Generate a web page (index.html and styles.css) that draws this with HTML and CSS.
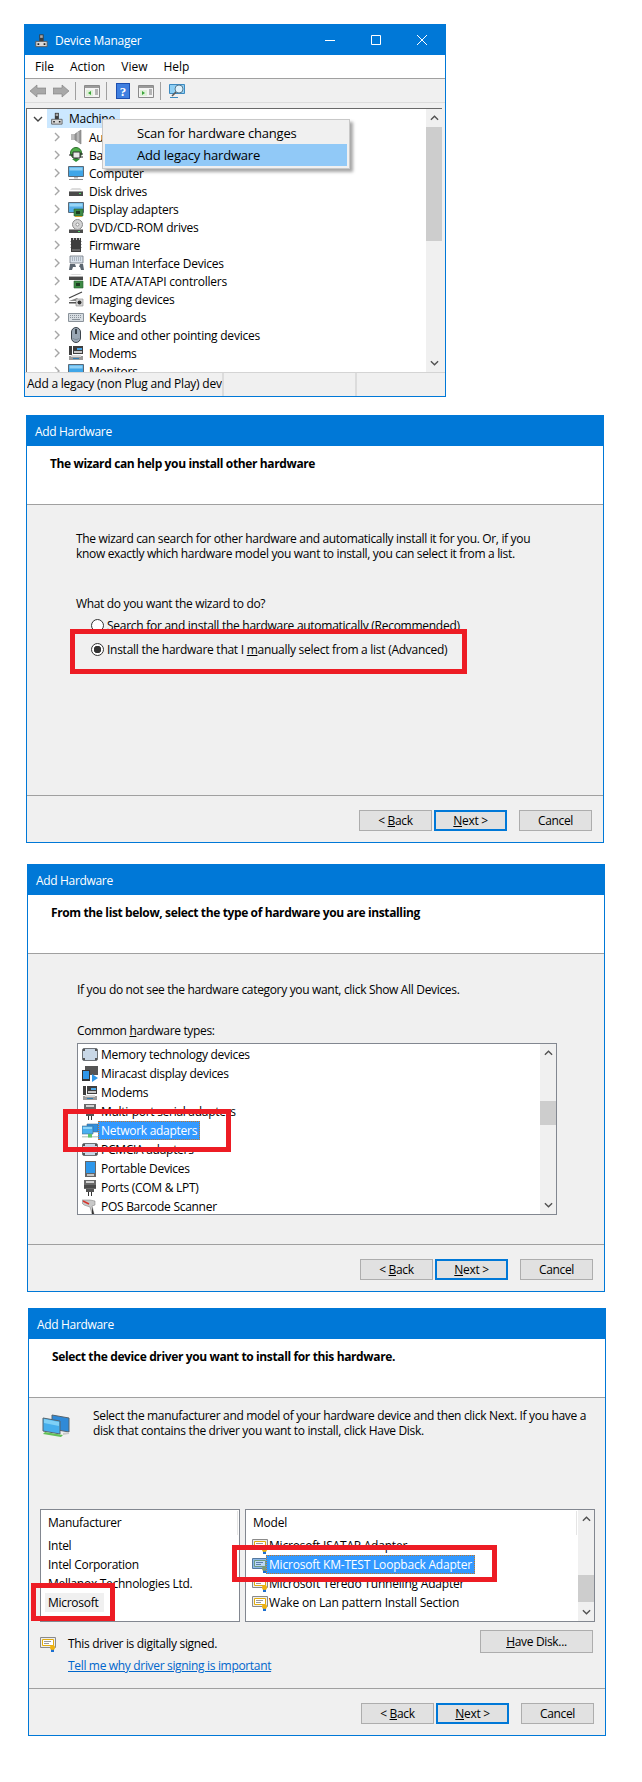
FILE: index.html
```html
<!DOCTYPE html>
<html lang="en">
<head>
    <meta charset="UTF-8">
    <title>Add legacy hardware</title>
    <link rel="stylesheet" href="styles.css">
</head>
<body>
    <svg class="sprite" xmlns="http://www.w3.org/2000/svg">
        <symbol id="i-machine" viewBox="0 0 16 16"><path d="M6 1h5v8H6z" fill="#3c3c3c"/><path d="M7 2h3v3H7z" fill="#a8a8a8"/><path d="M2 9h13v6H2z" fill="#d8d8d8" stroke="#555"/><path d="M4 11h2v2H4zM11 11h2v2h-2z" fill="#222"/></symbol>
        <symbol id="i-audio" viewBox="0 0 16 16"><path d="M3 5h4v6H3z" fill="#bcbcbc"/><path d="M7 5l6-4v14l-6-4z" fill="#9a9a9a" stroke="#777" stroke-width=".6"/><path d="M10 3v10" stroke="#d4d4d4"/></symbol>
        <symbol id="i-battery" viewBox="0 0 16 16"><circle cx="8" cy="6" r="5.5" fill="#4fae4a" stroke="#2c6e2a"/><path d="M5 5h7v6H5z" fill="#e8e8e8" stroke="#333"/><path d="M1 8h4M12 7h3M12 10h3" stroke="#222" stroke-width="1.2"/><path d="M4 12l4 3 4-3" fill="#2f8f33"/></symbol>
        <symbol id="i-computer" viewBox="0 0 16 16"><path d="M.5 1.500h15v10H.5z" fill="#3fa6e8" stroke="#5a6a78"/><path d="M1.500 2.500h13v3h-13z" fill="#8fd0f5"/><path d="M6 12h4v1.500H6z" fill="#b8b8b8"/><path d="M1 14h14v1H1z" fill="#8a8a8a"/></symbol>
        <symbol id="i-disk" viewBox="0 0 16 16"><path d="M2 7l2-2h8l2 2z" fill="#dcdcdc"/><path d="M1 8h14v5H1z" fill="#4a4a4a"/><path d="M1 8h14v1H1z" fill="#9a9a9a"/><path d="M11 10h2v1h-2z" fill="#4cd964"/></symbol>
        <symbol id="i-display" viewBox="0 0 16 16"><path d="M.5 1.500h15v10H.5z" fill="#57afe8" stroke="#5a6a78"/><path d="M1.500 2.500h13v3h-13z" fill="#9ad6f6"/><path d="M6 8h9v7H6z" fill="#3d8a45" stroke="#2a5f30" stroke-width=".6"/><path d="M8 10h4v3H8z" fill="#1e3d22"/><path d="M7 15h7v1H7z" fill="#d1a52b"/></symbol>
        <symbol id="i-dvd" viewBox="0 0 16 16"><circle cx="9.500" cy="5.500" r="5" fill="#d4d4d4" stroke="#8a8a8a"/><circle cx="9.500" cy="5.500" r="1.500" fill="#fff" stroke="#666" stroke-width=".6"/><path d="M1 10h14v4H1z" fill="#4a4a4a"/><path d="M1 10h14v1H1z" fill="#a0a0a0"/><path d="M10 12h2v1h-2z" fill="#4cd964"/></symbol>
        <symbol id="i-firmware" viewBox="0 0 16 16"><path d="M3 1h10v14H3z" fill="#3e3e3e"/><path d="M5 1h1v2H5zM8 1h1v2H8zM11 1h1v2h-1zM2 4h1v1H2zM2 7h1v1H2zM2 10h1v1H2zM13 4h1v1h-1zM13 7h1v1h-1zM13 10h1v1h-1z" fill="#bdbdbd"/><path d="M4 12h8v2H4z" fill="#666"/></symbol>
        <symbol id="i-hid" viewBox="0 0 16 16"><path d="M2 1h13v7H2z" fill="#d9e1ea" stroke="#6f7780" stroke-width=".8"/><path d="M4 3h9M4 5h9" stroke="#7f8a96" stroke-dasharray="1 1"/><path d="M1 15l1-6h5l1 3h3l1-3h3l1 6h-3l-1-3H5l-1 3z" fill="#5c6670"/></symbol>
        <symbol id="i-ide" viewBox="0 0 16 16"><path d="M2 2l2-1h8l2 1z" fill="#dcdcdc"/><path d="M1 3h14v4H1z" fill="#4a4a4a"/><path d="M1 3h14v1H1z" fill="#b0b0b0"/><path d="M6 8h9v7H6z" fill="#3d8a45" stroke="#2a5f30" stroke-width=".6"/><path d="M8 10h4v3H8z" fill="#1e3d22"/></symbol>
        <symbol id="i-imaging" viewBox="0 0 16 16"><path d="M1 7L14 1" stroke="#444" stroke-width="1.200"/><path d="M1 10l8-3 1 1v2z" fill="#888"/><path d="M8 8h7v7H8z" fill="#d8d8d8" stroke="#888" stroke-width=".6"/><circle cx="11.500" cy="11.500" r="2" fill="#333"/><path d="M1 11h7v1.500H1z" fill="#555"/></symbol>
        <symbol id="i-keyboard" viewBox="0 0 16 16"><path d="M.5 4.500h15v8H.5z" fill="#d7dde2" stroke="#8a929a"/><path d="M2 6.500h12M2 8.500h12" stroke="#8a929a" stroke-dasharray="1 1"/><path d="M4 10.500h8" stroke="#8a929a"/></symbol>
        <symbol id="i-mouse" viewBox="0 0 16 16"><rect x="3.500" y=".5" width="9" height="15" rx="4.500" fill="#9aa7b4" stroke="#3c444c"/><path d="M8 2v5" stroke="#39424a" stroke-width="2"/><path d="M5 11c1 2 5 2 6 0" stroke="#7d8a96" fill="none"/></symbol>
        <symbol id="i-modem" viewBox="0 0 16 16"><path d="M1 1h3v9H1z" fill="#3e3e3e"/><path d="M5 1h10v8H5z" fill="#3e3e3e"/><path d="M9 3h5v2H9z" fill="#49a6e6"/><path d="M6 6h8v2H6z" fill="#c8c8c8"/><path d="M1 11h14v4H1z" fill="#9a9a9a"/><path d="M3 10h10v2H3z" fill="#d8d8d8"/><path d="M5 13h6v1H5z" fill="#2f7db3"/></symbol>
        <symbol id="i-card" viewBox="0 0 16 16"><rect x=".5" y="1.500" width="15" height="12" rx="1.500" fill="#c8d7e6" stroke="#6e7378"/><path d="M1 2h2v2H1zM13 2h2v2h-2zM1 11h2v2H1zM13 11h2v2h-2z" fill="#555"/></symbol>
        <symbol id="i-miracast" viewBox="0 0 16 16"><path d="M3 0h13v9H3z" fill="#555"/><path d="M0 4h8v11H0z" fill="#333"/><path d="M1 5h6v8H1z" fill="#2e97ea"/><path d="M10 8l6 4-6 4z" fill="#2e97ea"/></symbol>
        <symbol id="i-port" viewBox="0 0 16 16"><path d="M2 0h12v9H2z" fill="#6a6a6a"/><path d="M4 1h8v2H4z" fill="#d2d2d2"/><path d="M2 5h12v3H2z" fill="#4a4a4a"/><path d="M4 9h8v3H4z" fill="#555"/><path d="M6 12h1v4H6zM9 12h1v4H9z" fill="#333"/></symbol>
        <symbol id="i-network" viewBox="0 0 16 16"><path d="M5 1h11v8H5z" fill="#2e8fe0" stroke="#4b6b86" stroke-width=".6"/><path d="M0 3h11v8H0z" fill="#4ab0f0" stroke="#4b6b86" stroke-width=".6"/><path d="M1 4h9v2H1z" fill="#8fd4f8"/><path d="M0 13h16v1.500H0z" fill="#c4d0c8"/><path d="M6 11h4v3.500H6z" fill="#5dc46a"/></symbol>
        <symbol id="i-portable" viewBox="0 0 16 16"><path d="M3 0h11v16H3z" fill="#666"/><path d="M4 1h9v11H4z" fill="#2e97ea"/><path d="M5 13h7v2H5z" fill="#c4c4c4"/></symbol>
        <symbol id="i-pos" viewBox="0 0 16 16"><path d="M0 1h8l5 1v4l-3 1 2 8h-2L8 8 2 6 0 4z" fill="#c8c8c8" stroke="#777" stroke-width=".5"/><path d="M1 2l6 3" stroke="#d8342c" stroke-width="1.500"/><path d="M10 8l2 7h-2z" fill="#333"/></symbol>
        <symbol id="i-cert" viewBox="0 0 16 16"><path d="M.5 1.500h15v10H.5z" fill="#eee" stroke="#8a8a8a"/><path d="M2.500 3.500h11v6h-11z" fill="#fff" stroke="#e2ad10"/><path d="M4 5.500h7M4 7.500h5" stroke="#9a9a9a"/><path d="M11 13h3v3h-3z" fill="#1c6fd0"/><circle cx="12.500" cy="11.500" r="2.500" fill="#eeb211"/></symbol>
        <symbol id="i-cert-sel" viewBox="0 0 16 16"><path d="M.5 1.500h15v10H.5z" fill="#8cb8e8" stroke="#55789e"/><path d="M2.500 3.500h11v6h-11z" fill="#bcd8f6" stroke="#6f9a80"/><path d="M4 5.500h7M4 7.500h5" stroke="#5b7fa8"/><path d="M11 13h3v3h-3z" fill="#1c6fd0"/><circle cx="12.500" cy="11.500" r="2.500" fill="#7a9a7a"/></symbol>
        <symbol id="i-net-large" viewBox="0 0 28 26"><path d="M10 2l17 3v14l-17-3z" fill="#2f8ad8" stroke="#55646e"/><path d="M1 5l17 3v13L1 18z" fill="#46aeec" stroke="#55646e"/><path d="M2 6l15 3v4L2 10z" fill="#7fd0f6"/><path d="M1 21l18 3 2-2-18-3z" fill="#63c057"/><path d="M21 22l6-1v-2l-6 1z" fill="#c9c9c9"/></symbol>
    </svg>

    <div class="window device-manager">
        <div class="titlebar">
            <svg class="title-icon"><use href="#i-machine"/></svg>
            <span class="title-text">Device Manager</span>
            <div class="window-controls">
                <svg width="10" height="10" viewBox="0 0 10 10"><path d="M0 5.500h10" stroke="#fff"/></svg>
                <svg width="10" height="10" viewBox="0 0 10 10"><path d="M.5.500h9v9h-9z" fill="none" stroke="#fff"/></svg>
                <svg width="10" height="10" viewBox="0 0 10 10"><path d="M0 0l10 10M10 0L0 10" stroke="#fff"/></svg>
            </div>
        </div>
        <div class="menubar">
            <span>File</span><span>Action</span><span>View</span><span>Help</span>
        </div>
        <div class="toolbar">
            <svg class="tool tool-back" viewBox="0 0 16 16"><path d="M0 8l7-6v3h9v6H7v3z" fill="#a8a8a8" stroke="#7c7c7c" stroke-width=".6"/></svg>
            <svg class="tool" viewBox="0 0 16 16"><path d="M16 8L9 2v3H0v6h9v3z" fill="#a8a8a8" stroke="#7c7c7c" stroke-width=".6"/></svg>
            <i class="tool-sep"></i>
            <svg class="tool" viewBox="0 0 16 16"><path d="M.5 2.500h15v12H.5z" fill="#f4f4f4" stroke="#8a8a8a"/><path d="M1 3h14v2H1z" fill="#9a9a9a"/><path d="M2 7h7v6H2z" fill="#dff0d8"/><path d="M7 8v4L4 10z" fill="#3aa53a"/><path d="M11 7h3M11 9h3M11 11h3" stroke="#777"/></svg>
            <i class="tool-sep"></i>
            <svg class="tool help-tool" viewBox="0 0 14 16"><path d="M0 0h14v16H0z" fill="#1c4fb0"/><path d="M1 1h12v14H1z" fill="#3f7fe0"/><text x="7" y="13" class="help-mark">?</text></svg>
            <svg class="tool" viewBox="0 0 16 16"><path d="M.5 2.500h15v12H.5z" fill="#f4f4f4" stroke="#8a8a8a"/><path d="M1 3h14v2H1z" fill="#9a9a9a"/><path d="M2 7h7v6H2z" fill="#dff0d8"/><path d="M4 8v4l3-2z" fill="#3aa53a"/><path d="M11 7h3M11 9h3M11 11h3" stroke="#777"/></svg>
            <i class="tool-sep"></i>
            <svg class="tool" viewBox="0 0 16 16"><path d="M.5 1.500h15v9H.5z" fill="#8fd0f5" stroke="#3d8ac0"/><path d="M1 14h8v1H1z" fill="#3d8ac0"/><circle cx="10" cy="6" r="4" fill="#dff2fc" stroke="#5a7a90"/><path d="M7 9l-4 4" stroke="#5a5a5a" stroke-width="1.600"/></svg>
        </div>
        <div class="toolbar-gap"></div>
        <div class="tree-pane">
            <div class="tree">
                <div class="tree-root">
                    <svg class="expander" viewBox="0 0 10 10"><path d="M1 3l4 4 4-4" fill="none" stroke="#444" stroke-width="1.400"/></svg>
                    <span class="root-label"><svg class="root-icon"><use href="#i-machine"/></svg>Machine</span>
                </div>
                <div class="tree-row"><svg class="expander" viewBox="0 0 10 10"><path d="M3 1l4 4-4 4" fill="none" stroke="#a6a6a6" stroke-width="1.400"/></svg><svg class="row-icon"><use href="#i-audio"/></svg>Audio inputs and outputs</div>
                <div class="tree-row"><svg class="expander" viewBox="0 0 10 10"><path d="M3 1l4 4-4 4" fill="none" stroke="#a6a6a6" stroke-width="1.400"/></svg><svg class="row-icon"><use href="#i-battery"/></svg>Batteries</div>
                <div class="tree-row"><svg class="expander" viewBox="0 0 10 10"><path d="M3 1l4 4-4 4" fill="none" stroke="#a6a6a6" stroke-width="1.400"/></svg><svg class="row-icon"><use href="#i-computer"/></svg>Computer</div>
                <div class="tree-row"><svg class="expander" viewBox="0 0 10 10"><path d="M3 1l4 4-4 4" fill="none" stroke="#a6a6a6" stroke-width="1.400"/></svg><svg class="row-icon"><use href="#i-disk"/></svg>Disk drives</div>
                <div class="tree-row"><svg class="expander" viewBox="0 0 10 10"><path d="M3 1l4 4-4 4" fill="none" stroke="#a6a6a6" stroke-width="1.400"/></svg><svg class="row-icon"><use href="#i-display"/></svg>Display adapters</div>
                <div class="tree-row"><svg class="expander" viewBox="0 0 10 10"><path d="M3 1l4 4-4 4" fill="none" stroke="#a6a6a6" stroke-width="1.400"/></svg><svg class="row-icon"><use href="#i-dvd"/></svg>DVD/CD-ROM drives</div>
                <div class="tree-row"><svg class="expander" viewBox="0 0 10 10"><path d="M3 1l4 4-4 4" fill="none" stroke="#a6a6a6" stroke-width="1.400"/></svg><svg class="row-icon"><use href="#i-firmware"/></svg>Firmware</div>
                <div class="tree-row"><svg class="expander" viewBox="0 0 10 10"><path d="M3 1l4 4-4 4" fill="none" stroke="#a6a6a6" stroke-width="1.400"/></svg><svg class="row-icon"><use href="#i-hid"/></svg>Human Interface Devices</div>
                <div class="tree-row"><svg class="expander" viewBox="0 0 10 10"><path d="M3 1l4 4-4 4" fill="none" stroke="#a6a6a6" stroke-width="1.400"/></svg><svg class="row-icon"><use href="#i-ide"/></svg>IDE ATA/ATAPI controllers</div>
                <div class="tree-row"><svg class="expander" viewBox="0 0 10 10"><path d="M3 1l4 4-4 4" fill="none" stroke="#a6a6a6" stroke-width="1.400"/></svg><svg class="row-icon"><use href="#i-imaging"/></svg>Imaging devices</div>
                <div class="tree-row"><svg class="expander" viewBox="0 0 10 10"><path d="M3 1l4 4-4 4" fill="none" stroke="#a6a6a6" stroke-width="1.400"/></svg><svg class="row-icon"><use href="#i-keyboard"/></svg>Keyboards</div>
                <div class="tree-row"><svg class="expander" viewBox="0 0 10 10"><path d="M3 1l4 4-4 4" fill="none" stroke="#a6a6a6" stroke-width="1.400"/></svg><svg class="row-icon"><use href="#i-mouse"/></svg>Mice and other pointing devices</div>
                <div class="tree-row"><svg class="expander" viewBox="0 0 10 10"><path d="M3 1l4 4-4 4" fill="none" stroke="#a6a6a6" stroke-width="1.400"/></svg><svg class="row-icon"><use href="#i-modem"/></svg>Modems</div>
                <div class="tree-row"><svg class="expander" viewBox="0 0 10 10"><path d="M3 1l4 4-4 4" fill="none" stroke="#a6a6a6" stroke-width="1.400"/></svg><svg class="row-icon"><use href="#i-computer"/></svg>Monitors</div>
            </div>
            <div class="scrollbar tree-scroll">
                <svg class="arrow" viewBox="0 0 10 6"><path d="M1 5l4-4 4 4" fill="none" stroke="#505050" stroke-width="1.500"/></svg>
                <div class="track"><div class="thumb"></div></div>
                <svg class="arrow" viewBox="0 0 10 6"><path d="M1 1l4 4 4-4" fill="none" stroke="#505050" stroke-width="1.500"/></svg>
            </div>
        </div>
        <div class="statusbar">
            <div class="status-main">Add a legacy (non Plug and Play) device to the computer.</div>
            <div class="status-mid"></div>
            <div class="status-end"></div>
        </div>
        <div class="context-menu">
            <div class="menu-item">Scan for hardware changes</div>
            <div class="menu-item active">Add legacy hardware</div>
        </div>
    </div>

    <div class="window wizard wizard-one">
        <div class="titlebar"><span class="title-text wizard-title">Add Hardware</span></div>
        <div class="wizard-head">The wizard can help you install other hardware</div>
        <div class="wizard-body choice-body">
            <p class="intro">The wizard can search for other hardware and automatically install it for you. Or, if you<br>know exactly which hardware model you want to install, you can select it from a list.</p>
            <p class="question">What do you want the wizard to do?</p>
            <div class="radio-row"><i class="radio"></i>Search for and install the hardware automatically (Recommended)</div>
            <div class="radio-row"><i class="radio checked"></i><span>Install the hardware that I <u>m</u>anually select from a list (Advanced)</span></div>
        </div>
        <div class="wizard-foot">
            <button class="btn"><span>&lt; <u>B</u>ack</span></button>
            <button class="btn btn-default"><span><u>N</u>ext &gt;</span></button>
            <button class="btn btn-cancel"><span>Cancel</span></button>
        </div>
        <div class="red-box box-radio"></div>
    </div>

    <div class="window wizard wizard-two">
        <div class="titlebar"><span class="title-text wizard-title">Add Hardware</span></div>
        <div class="wizard-head">From the list below, select the type of hardware you are installing</div>
        <div class="wizard-body types-body">
            <p class="types-hint">If you do not see the hardware category you want, click Show All Devices.</p>
            <p class="types-label">Common <u>h</u>ardware types:</p>
            <div class="listbox">
                <div class="list-rows">
                    <div class="list-row"><svg class="row-icon"><use href="#i-card"/></svg>Memory technology devices</div>
                    <div class="list-row"><svg class="row-icon"><use href="#i-miracast"/></svg>Miracast display devices</div>
                    <div class="list-row"><svg class="row-icon"><use href="#i-modem"/></svg>Modems</div>
                    <div class="list-row"><svg class="row-icon"><use href="#i-port"/></svg>Multi-port serial adapters</div>
                    <div class="list-row"><svg class="row-icon"><use href="#i-network"/></svg><span class="sel">Network adapters</span></div>
                    <div class="list-row"><svg class="row-icon"><use href="#i-card"/></svg>PCMCIA adapters</div>
                    <div class="list-row"><svg class="row-icon"><use href="#i-portable"/></svg>Portable Devices</div>
                    <div class="list-row"><svg class="row-icon"><use href="#i-port"/></svg>Ports (COM &amp; LPT)</div>
                    <div class="list-row"><svg class="row-icon"><use href="#i-pos"/></svg>POS Barcode Scanner</div>
                </div>
                <div class="scrollbar types-scroll">
                    <svg class="arrow" viewBox="0 0 10 6"><path d="M1 5l4-4 4 4" fill="none" stroke="#505050" stroke-width="1.500"/></svg>
                    <div class="track"><div class="thumb"></div></div>
                    <svg class="arrow" viewBox="0 0 10 6"><path d="M1 1l4 4 4-4" fill="none" stroke="#505050" stroke-width="1.500"/></svg>
                </div>
            </div>
        </div>
        <div class="wizard-foot">
            <button class="btn"><span>&lt; <u>B</u>ack</span></button>
            <button class="btn btn-default"><span><u>N</u>ext &gt;</span></button>
            <button class="btn btn-cancel"><span>Cancel</span></button>
        </div>
        <div class="red-box box-network"></div>
    </div>

    <div class="window wizard wizard-three">
        <div class="titlebar"><span class="title-text wizard-title">Add Hardware</span></div>
        <div class="wizard-head">Select the device driver you want to install for this hardware.</div>
        <div class="wizard-body driver-body">
            <div class="driver-intro">
                <svg class="net-large"><use href="#i-net-large"/></svg>
                <p>Select the manufacturer and model of your hardware device and then click Next. If you have a<br>disk that contains the driver you want to install, click Have Disk.</p>
            </div>
            <div class="driver-lists">
                <div class="listbox maker-list">
                    <div class="list-rows">
                        <div class="list-head">Manufacturer</div>
                        <div class="maker-row">Intel</div>
                        <div class="maker-row">Intel Corporation</div>
                        <div class="maker-row">Mellanox Technologies Ltd.</div>
                        <div class="maker-row"><span class="sel-grey">Microsoft</span></div>
                    </div>
                    <i class="head-line"></i>
                </div>
                <div class="listbox model-list">
                    <div class="list-rows">
                        <div class="list-head">Model</div>
                        <div class="list-row"><svg class="row-icon"><use href="#i-cert"/></svg>Microsoft ISATAP Adapter</div>
                        <div class="list-row"><svg class="row-icon"><use href="#i-cert-sel"/></svg><span class="sel">Microsoft KM-TEST Loopback Adapter</span></div>
                        <div class="list-row"><svg class="row-icon"><use href="#i-cert"/></svg>Microsoft Teredo Tunneling Adapter</div>
                        <div class="list-row"><svg class="row-icon"><use href="#i-cert"/></svg>Wake on Lan pattern Install Section</div>
                    </div>
                    <i class="head-line"></i>
                    <div class="scrollbar model-scroll">
                        <svg class="arrow" viewBox="0 0 10 6"><path d="M1 5l4-4 4 4" fill="none" stroke="#505050" stroke-width="1.500"/></svg>
                        <div class="track"><div class="thumb"></div></div>
                        <svg class="arrow" viewBox="0 0 10 6"><path d="M1 1l4 4 4-4" fill="none" stroke="#505050" stroke-width="1.500"/></svg>
                    </div>
                </div>
            </div>
            <div class="driver-sign">
                <svg class="sign-icon"><use href="#i-cert"/></svg>
                <div class="sign-text">
                    <div>This driver is digitally signed.</div>
                    <a class="sign-link">Tell me why driver signing is important</a>
                </div>
                <button class="btn btn-disk"><span><u>H</u>ave Disk...</span></button>
            </div>
        </div>
        <div class="wizard-foot">
            <button class="btn"><span>&lt; <u>B</u>ack</span></button>
            <button class="btn btn-default"><span><u>N</u>ext &gt;</span></button>
            <button class="btn btn-cancel"><span>Cancel</span></button>
        </div>
        <div class="red-box box-maker"></div>
        <div class="red-box box-model"></div>
    </div>
</body>
</html>
```

FILE: styles.css
```css
* {
    margin: 0;
    padding: 0;
    box-sizing: border-box;
}

body {
    background-color: #fff;
    color: #000;
    font-family: "Open Sans", "Noto Sans", sans-serif;
    font-size: 12px;
    letter-spacing: -0.33px;
    line-height: 15px;
    padding-top: 24px;
}

.sprite {
    display: none;
}

.window {
    position: relative;
    display: flex;
    flex-direction: column;
    border: 1px solid #0078d7;
    background-color: #f0f0f0;
}

.device-manager {
    width: 422px;
    height: 373px;
    margin-left: 24px;
    overflow: hidden;
    letter-spacing: -0.23px;
}

.wizard {
    width: 578px;
}

.wizard-one {
    height: 428px;
    margin: 18px 0 0 26px;
}

.wizard-two {
    height: 428px;
    margin: 21px 0 0 27px;
}

.wizard-three {
    height: 428px;
    margin: 16px 0 0 28px;
}

.titlebar {
    flex: 0 0 30px;
    display: flex;
    align-items: center;
    background-color: #0078d7;
    color: #fff;
}

.title-icon {
    width: 14px;
    height: 15px;
    margin: 0 7px 0 9px;
}

.wizard-title {
    margin-left: 8px;
}

.window-controls {
    display: flex;
    gap: 36px;
    margin-left: auto;
    margin-right: 18px;
}

.menubar {
    flex: 0 0 24px;
    display: flex;
    align-items: center;
    gap: 16px;
    padding-left: 10px;
    background-color: #fff;
    border-bottom: 1px solid #a0a0a0;
    letter-spacing: 0;
}

.toolbar {
    flex: 0 0 23px;
    display: flex;
    align-items: center;
    padding-left: 5px;
    background-color: #f0f0f0;
}

.tool {
    width: 16px;
    height: 16px;
    margin-right: 6px;
}

.tool-back {
    margin-right: 7px;
}

.help-tool {
    width: 14px;
    margin-left: 1px;
    margin-right: 8px;
}

.help-mark {
    fill: #fff;
    font-family: "Liberation Serif", serif;
    font-size: 13px;
    font-weight: 700;
    text-anchor: middle;
}

.tool-sep {
    width: 1px;
    height: 18px;
    margin: 0 8px 0 0;
    background-color: #a0a0a0;
}

.toolbar-gap {
    flex: 0 0 6px;
    border-top: 1px solid #dcdcdc;
}

.tree-pane {
    flex: 1;
    min-height: 0;
    display: flex;
    margin: 0 3px 0 1px;
    background-color: #fff;
    border-top: 1px solid #696969;
    border-left: 1px solid #696969;
}

.tree {
    flex: 1;
    min-width: 0;
    overflow: hidden;
}

.tree-root {
    height: 19px;
    display: flex;
    align-items: center;
    padding-left: 6px;
}

.root-label {
    display: flex;
    align-items: center;
    height: 19px;
    margin-left: 4px;
    padding: 0 5px 0 3px;
    background-color: #cce8ff;
    width: 73px;
}

.root-icon {
    width: 14px;
    height: 15px;
    margin-right: 6px;
}

.expander {
    width: 10px;
    height: 10px;
    flex: none;
}

.tree-row {
    height: 18px;
    display: flex;
    align-items: center;
    padding-left: 25px;
    white-space: nowrap;
}

.row-icon {
    width: 16px;
    height: 16px;
    flex: none;
}

.tree-row .row-icon {
    margin: 0 5px 0 6px;
}

.scrollbar {
    flex: 0 0 16px;
    display: flex;
    flex-direction: column;
    align-items: center;
    background-color: #f0f0f0;
}

.arrow {
    flex: 0 0 auto;
    width: 9px;
    height: 6px;
    margin: 6px 0;
}

.track {
    flex: 1;
    width: 100%;
    min-height: 0;
}

.thumb {
    background-color: #cdcdcd;
}

.tree-scroll .thumb {
    height: 114px;
}

.statusbar {
    flex: 0 0 24px;
    display: flex;
    padding-left: 2px;
    align-items: center;
    border-top: 1px solid #d4d4d4;
}

.status-main {
    width: 197px;
    height: 100%;
    line-height: 22px;
    overflow: hidden;
    white-space: nowrap;
    border-right: 2px solid #dcdcdc;
}

.status-mid {
    width: 133px;
    height: 100%;
    border-right: 2px solid #dcdcdc;
}

.context-menu {
    position: absolute;
    left: 77px;
    top: 94px;
    width: 248px;
    height: 50px;
    padding: 2px;
    background-color: #f0f0f0;
    border: 1px solid #c8c8c8;
    box-shadow: 3px 3px 3px rgba(0, 0, 0, 0.35);
    font-size: 13px;
    letter-spacing: -0.2px;
}

.menu-item {
    height: 22px;
    line-height: 22px;
    padding-left: 32px;
}

.menu-item.active {
    background-color: #91c9f7;
}

.wizard-head {
    flex: 0 0 59px;
    padding: 10px 0 0 23px;
    background-color: #fff;
    border-bottom: 1px solid #a0a0a0;
    font-weight: 700;
    letter-spacing: -0.37px;
}

.wizard-body {
    flex: 1;
    min-height: 0;
}

.wizard-foot {
    flex: 0 0 47px;
    display: flex;
    padding: 14px 11px 0 0;
    justify-content: flex-end;
    gap: 2px;
    border-top: 1px solid #a0a0a0;
}

.btn {
    width: 73px;
    height: 21px;
    background-color: #e1e1e1;
    border: 1px solid #adadad;
    font: inherit;
    letter-spacing: inherit;
    color: #000;
}

.btn-default {
    border: 2px solid #0078d7;
}

.btn-cancel {
    margin-left: 10px;
}

.choice-body {
    padding: 26px 0 0 49px;
}

.question {
    margin: 35px 0 2px;
}

.radio-row {
    display: flex;
    align-items: center;
    height: 24px;
    padding-left: 15px;
    white-space: pre;
    letter-spacing: -0.27px;
}

.radio {
    flex: none;
    width: 13px;
    height: 13px;
    margin-right: 3px;
    border: 1px solid #333;
    border-radius: 50%;
    background-color: #fff;
}

.radio.checked {
    background: radial-gradient(circle, #333 0 3.5px, #fff 4px);
}

.red-box {
    position: absolute;
    border: 5px solid #ed1c24;
}

.box-radio {
    left: 43px;
    top: 213px;
    width: 397px;
    height: 45px;
}

.box-network {
    left: 35px;
    top: 244px;
    width: 168px;
    height: 43px;
}

.types-body {
    padding: 28px 0 0 49px;
}

.types-label {
    margin-top: 26px;
    margin-bottom: 5px;
}

.listbox {
    display: flex;
    background-color: #fff;
    border: 1px solid #828790;
    letter-spacing: -0.28px;
}

.types-body .listbox {
    width: 480px;
    height: 172px;
}

.list-rows {
    flex: 1;
    min-width: 0;
    padding: 1px 0 0 4px;
    overflow: hidden;
}

.list-row {
    height: 19px;
    display: flex;
    align-items: center;
    white-space: nowrap;
}

.list-row .row-icon {
    margin-right: 3px;
}

.sel {
    display: block;
    height: 19px;
    margin-left: -3px;
    padding: 0 2px;
    line-height: 17px;
    background-color: #3399ff;
    border: 1px dotted #c0762a;
    color: #fff;
}

.types-scroll .track {
    padding-top: 39px;
}

.types-scroll .thumb {
    height: 24px;
}

.driver-body {
    padding: 10px 0 0 11px;
}

.driver-intro {
    display: flex;
    height: 101px;
}

.net-large {
    width: 28px;
    height: 26px;
    margin: 5px 23px 0 2px;
    flex: none;
}

.driver-lists {
    display: flex;
    gap: 5px;
}

.driver-lists .listbox {
    position: relative;
    height: 113px;
}

.maker-list {
    width: 200px;
}

.model-list {
    width: 350px;
    letter-spacing: -0.2px;
}

.list-head {
    height: 22px;
    line-height: 22px;
    padding-left: 3px;
    margin-bottom: 2px;
}

.driver-lists .list-rows {
    padding: 2px 0 0 4px;
}

.maker-row {
    height: 19px;
    line-height: 19px;
    padding-left: 3px;
    white-space: nowrap;
}

.sel-grey {
    display: inline-block;
    margin-left: -3px;
    padding: 0 6px 0 3px;
    background-color: #f0f0f0;
}

.head-line {
    position: absolute;
    right: 1px;
    top: 1px;
    width: 1px;
    height: 24px;
    background-color: #e5e5e5;
}

.model-list .head-line {
    right: 17px;
}

.model-list .list-row .row-icon {
    margin: 0 1px 0 2px;
}

.model-scroll .track {
    padding-top: 47px;
}

.model-scroll .thumb {
    height: 27px;
}

.driver-sign {
    display: flex;
    margin-top: 14px;
}

.sign-icon {
    width: 16px;
    height: 16px;
    margin-right: 12px;
    flex: none;
}

.sign-text {
    flex: 1;
}

.sign-link {
    display: block;
    margin-top: 7px;
    color: #0066cc;
    text-decoration: underline;
}

.btn-disk {
    width: 113px;
    height: 23px;
    margin: -6px 12px 0 0;
}

.box-maker {
    left: 2px;
    top: 274px;
    width: 84px;
    height: 38px;
}

.box-model {
    left: 203px;
    top: 236px;
    width: 265px;
    height: 37px;
}
```
